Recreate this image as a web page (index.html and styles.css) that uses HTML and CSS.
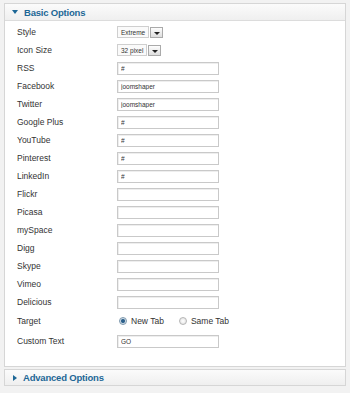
FILE: index.html
```html
<!DOCTYPE html>
<html lang="en">

<head>
  <meta charset="UTF-8" />
  <title>Module Options</title>
  <link rel="stylesheet" href="styles.css">
</head>

<body>
  <div class="wrap">
    <!-- basic options panel -->
    <div class="panel open">
      <div class="panel-head"><span class="arrow down"></span>Basic Options</div>
      <div class="panel-body">
        <div class="row">
          <label>Style</label>
          <div class="select"><span>Extreme</span><i></i></div>
        </div>
        <div class="row">
          <label>Icon Size</label>
          <div class="select"><span>32 pixel</span><i></i></div>
        </div>
        <div class="row"><label>RSS</label><input type="text" value="#"></div>
        <div class="row"><label>Facebook</label><input type="text" value="joomshaper"></div>
        <div class="row"><label>Twitter</label><input type="text" value="joomshaper"></div>
        <div class="row"><label>Google Plus</label><input type="text" value="#"></div>
        <div class="row"><label>YouTube</label><input type="text" value="#"></div>
        <div class="row"><label>Pinterest</label><input type="text" value="#"></div>
        <div class="row"><label>LinkedIn</label><input type="text" value="#"></div>
        <div class="row"><label>Flickr</label><input type="text"></div>
        <div class="row"><label>Picasa</label><input type="text"></div>
        <div class="row"><label>mySpace</label><input type="text"></div>
        <div class="row"><label>Digg</label><input type="text"></div>
        <div class="row"><label>Skype</label><input type="text"></div>
        <div class="row"><label>Vimeo</label><input type="text"></div>
        <div class="row"><label>Delicious</label><input type="text"></div>
        <div class="row target">
          <label>Target</label>
          <div class="radios">
            <span class="radio checked"></span><span class="rlabel">New Tab</span>
            <span class="radio"></span><span class="rlabel">Same Tab</span>
          </div>
        </div>
        <div class="row custom"><label>Custom Text</label><input type="text" value="GO"></div>
      </div>
    </div>
    <!-- advanced options (closed) -->
    <div class="panel">
      <div class="panel-head"><span class="arrow right"></span>Advanced Options</div>
    </div>
  </div>
</body>

</html>
```

FILE: styles.css
```css
* {
  margin: 0;
  padding: 0;
  box-sizing: border-box;
}

body {
  background: #f2f2f2;
  font-family: "Liberation Sans", Arial, sans-serif;
  font-size: 8.5px;
  color: #333;
}

.wrap {
  width: 350px;
  padding: 3px 4px;
}

.panel {
  border: 1px solid #d6d6d6;
  background: #fff;
  margin-bottom: 2px;
}

.panel-head {
  height: 15px;
  padding-left: 7px;
  background: linear-gradient(#fbfbfb, #efefef);
  color: #1d6796;
  font-weight: bold;
  font-size: 9.5px;
  letter-spacing: -0.2px;
  display: flex;
  align-items: center;
}

.panel.open .panel-head {
  border-bottom: 1px solid #dcdcdc;
  height: 17px;
}

.arrow {
  width: 0;
  height: 0;
  margin-right: 6px;
}

.arrow.down {
  border-left: 3px solid transparent;
  border-right: 3px solid transparent;
  border-top: 4px solid #1d6796;
}

.arrow.right {
  border-top: 3px solid transparent;
  border-bottom: 3px solid transparent;
  border-left: 4px solid #1d6796;
  margin-left: 1px;
}

.panel-body {
  padding: 2px 0 15px 12px;
}

.row {
  display: flex;
  align-items: center;
  height: 18px;
}

.row label {
  width: 100px;
}

.row input {
  width: 102px;
  height: 13px;
  border: 1px solid #c9c9c9;
  box-shadow: inset 1px 1px 0 #eee;
  font: 6.5px "Liberation Sans", Arial, sans-serif;
  color: #333;
  padding-left: 3px;
  outline: none;
}

.select {
  display: flex;
  align-items: center;
  gap: 1px;
  height: 12px;
}

.select span {
  height: 12px;
  line-height: 11px;
  border: 1px solid #cfcfcf;
  padding: 0 3px;
  font-size: 6.5px;
  background: #fafafa;
}

.select i {
  width: 13px;
  height: 11px;
  border: 1px solid #aaa;
  background: linear-gradient(#fdfdfd, #dedede);
  position: relative;
}

.select i::after {
  content: "";
  position: absolute;
  left: 3px;
  top: 4px;
  border-left: 3px solid transparent;
  border-right: 3px solid transparent;
  border-top: 3px solid #222;
}

.row.target {
  height: 20px;
}

.radios {
  display: flex;
  align-items: center;
  padding-left: 2px;
}

.radio {
  width: 8px;
  height: 8px;
  border-radius: 50%;
  border: 1px solid #b5b5b5;
  background: radial-gradient(#fff, #ddd);
  margin-right: 4px;
}

.radio.checked {
  background: radial-gradient(#2a5f8a 0 1.5px, #cfdce6 2.5px, #e8eef2);
  border-color: #7c97ad;
}

.rlabel {
  margin-right: 15px;
  font-size: 8.5px;
}

.row.custom {
  height: 20px;
}
```
